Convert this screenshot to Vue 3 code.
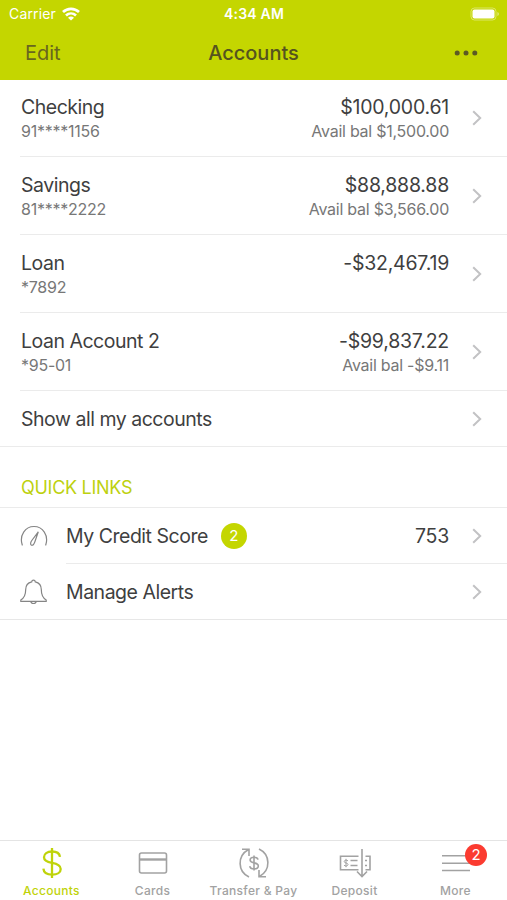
<template>
  <div class="screen">
    <header class="top">
      <div class="status-bar">
        <div class="carrier">
          <span>Carrier</span>
          <svg class="wifi" viewBox="0 0 18 14" fill="none" stroke="#fff" stroke-width="2.7">
            <path d="M1 5.1C5.5.8 12.5.8 17 5.1"></path>
            <path d="M4 8.5c2.9-2.700 7.100-2.700 10 0"></path>
            <path d="M9 13.600 6 10.700c1.700-1.500 4.300-1.500 6 0z" fill="#fff" stroke="none"></path>
          </svg>
        </div>
        <span class="time">4:34 AM</span>
        <svg class="battery" viewBox="0 0 30 14">
          <rect x="1" y="1" width="25" height="12" rx="3.5" fill="none" stroke="#fff" stroke-opacity=".4"></rect>
          <rect x="2.5" y="2.5" width="22" height="9" rx="2" fill="#fff"></rect>
          <path d="M27.5 5v4c1.7-.7 1.7-3.3 0-4z" fill="#fff" fill-opacity=".6"></path>
        </svg>
      </div>
      <nav class="nav-bar">
        <button type="button" class="btn-edit">Edit</button>
        <h1 class="title">Accounts</h1>
        <button type="button" class="btn-more" aria-label="Options">
          <svg viewBox="0 0 24 6" fill="#5c5a24">
            <circle cx="3.2" cy="3" r="2.5"></circle>
            <circle cx="12" cy="3" r="2.5"></circle>
            <circle cx="20.8" cy="3" r="2.5"></circle>
          </svg>
        </button>
      </nav>
    </header>

    <main class="content">
      <section class="accounts">
        <div v-for="account in accounts" :key="account.number" class="row account">
          <div class="names">
            <span class="main-text">{{ account.name }}</span>
            <span class="sub-text">{{ account.number }}</span>
          </div>
          <div class="amounts">
            <span class="amount">{{ account.balance }}</span>
            <span v-if="account.available" class="sub-text">Avail bal {{ account.available }}</span>
          </div>
          <svg class="chevron" viewBox="0 0 10 16"><path d="M1.2 1.2 8.2 8l-7 6.8"></path></svg>
        </div>
        <div class="row show-all">
          <span class="main-text grow">Show all my accounts</span>
          <svg class="chevron" viewBox="0 0 10 16"><path d="M1.2 1.2 8.2 8l-7 6.8"></path></svg>
        </div>
      </section>

      <h2 class="section-title">QUICK LINKS</h2>

      <section class="links">
        <div class="link">
          <svg class="link-icon" viewBox="0 0 28 28">
            <path d="M2.800 22.800h-.6C-.8 13.200 5.200 4.500 14 4.500s14.800 8.700 11.800 18.300h-.6"></path>
            <path d="M18.300 9.800 11.800 18.500c-1.400 2-1.600 4-.4 4.600 1.300.600 2.700-.700 3.300-2.900z"></path>
          </svg>
          <div class="row link-body">
            <span class="main-text">My Credit Score</span>
            <span class="badge">2</span>
            <span class="amount score">753</span>
            <svg class="chevron" viewBox="0 0 10 16"><path d="M1.2 1.2 8.2 8l-7 6.8"></path></svg>
          </div>
        </div>
        <div class="link">
          <svg class="link-icon" viewBox="0 0 28 28">
            <path d="M11.700 3.900c.2-2.500 3.400-2.500 3.600 0 3.900.9 6 3.800 6 7.700 0 5.500 1.200 8.300 4.900 10.500v1.200H.8v-1.200c3.700-2.200 4.900-5 4.900-10.500 0-3.900 2.100-6.800 6-7.700z"></path>
            <path d="M10.800 23.300c.5 2.900 4.900 2.900 5.400 0"></path>
          </svg>
          <div class="row link-body">
            <span class="main-text grow">Manage Alerts</span>
            <svg class="chevron" viewBox="0 0 10 16"><path d="M1.2 1.2 8.2 8l-7 6.8"></path></svg>
          </div>
        </div>
      </section>
    </main>

    <footer class="tab-bar">
      <div class="tab active">
        <svg class="tab-icon" viewBox="0 0 36 32" stroke-width="2.3">
          <path d="M18 1v30"></path>
          <path d="M26 9.800C25.500 6.300 22.500 4.500 18 4.500c-4.800 0-8 2.300-8 5.700 0 3.500 3 4.700 8 5.600 5.300.9 8.700 2.300 8.700 6.100 0 3.600-3.400 5.800-8.500 5.800-5.200 0-8.500-2.200-8.800-6"></path>
        </svg>
        <span>Accounts</span>
      </div>
      <div class="tab">
        <svg class="tab-icon" viewBox="0 0 36 32">
          <rect x="4.500" y="6" width="27" height="20" rx="2"></rect>
          <path d="M4.500 12.500h27" stroke-width="2.4"></path>
        </svg>
        <span>Cards</span>
      </div>
      <div class="tab">
        <svg class="tab-icon" viewBox="0 0 36 32">
          <path d="M13 30C1.500 24.500 1 9 12.500 2.500M6 2.200h7v6.800"></path>
          <path d="M23 2C34.500 7.500 35 23 23.500 29.500M30 29.800h-7v-6.800"></path>
          <path d="M18 8.500v15M22 12.600c-.3-1.600-1.900-2.400-4-2.400-2.300 0-3.900 1.100-3.900 2.800 0 1.800 1.500 2.400 4 2.900 2.700.5 4.200 1.200 4.200 3.100 0 1.800-1.700 2.900-4.200 2.900-2.400 0-4.100-1-4.300-2.800"></path>
        </svg>
        <span>Transfer &amp; Pay</span>
      </div>
      <div class="tab">
        <svg class="tab-icon" viewBox="0 0 36 32">
          <path d="M21.500 9.200H3.500v13.500h18M28.500 9.200h4.500v13.500h-4.500"></path>
          <path d="M25 2v27M20 24.500l5 5 5-5"></path>
          <path d="M13.500 13.500h7M13.500 18.500h7M28 13.500h2M28 18.500h2"></path>
          <path d="M9 11.800v8.400M11 13.900c-1-1.200-3.800-.9-3.800.6 0 2 3.800 1 3.800 3 0 1.700-2.900 2-4 .7" stroke-width="1"></path>
        </svg>
        <span>Deposit</span>
      </div>
      <div class="tab">
        <svg class="tab-icon" viewBox="0 0 36 32">
          <path d="M4 8.700h28M4 16.200h28M4 23.500h28"></path>
        </svg>
        <span>More</span>
        <span class="tab-badge">2</span>
      </div>
    </footer>
  </div>
</template>

<script setup>
const accounts = [
  { name: 'Checking', number: '91****1156', balance: '$100,000.61', available: '$1,500.00' },
  { name: 'Savings', number: '81****2222', balance: '$88,888.88', available: '$3,566.00' },
  { name: 'Loan', number: '*7892', balance: '-$32,467.19' },
  { name: 'Loan Account 2', number: '*95-01', balance: '-$99,837.22', available: '-$9.11' }
]
</script>

<style>
body {
  margin: 0;
  background: #fff;
}
</style>

<style scoped>
.screen {
  display: flex;
  flex-direction: column;
  width: 100%;
  height: 100vh;
  overflow: hidden;
  background: #fff;
  color: #3f3f3f;
  font-family: Inter, "Liberation Sans", sans-serif;
}

.top {
  height: 79px;
  background: #c4d600;
  box-shadow: 0 1px 0 #c4d600;
}

.status-bar {
  display: grid;
  grid-template-columns: 1fr auto 1fr;
  align-items: center;
  height: 27px;
  padding: 0 8px 0 9px;
  color: #fff;
  font-size: 14px;
  line-height: 27px;
}

.carrier {
  display: flex;
  align-items: center;
  gap: 6px;
  letter-spacing: 0.15px;
}

.wifi {
  width: 18px;
  height: 14px;
}

.time {
  font-weight: 600;
  letter-spacing: 0.2px;
}

.battery {
  justify-self: end;
  width: 30px;
  height: 14px;
  margin-right: -1px;
}

.nav-bar {
  display: grid;
  grid-template-columns: 1fr auto 1fr;
  align-items: center;
  height: 52px;
  padding: 0 25px;
}

button {
  padding: 0;
  border: none;
  background: none;
  font-family: inherit;
  cursor: pointer;
}

.btn-edit {
  justify-self: start;
  color: #68661f;
  font-size: 20px;
}

.title {
  margin: 0;
  color: #55531f;
  font-size: 20px;
  font-weight: 450;
}

.btn-more {
  display: flex;
  justify-self: end;
  margin-right: 4px;
}

.btn-more svg {
  width: 24px;
  height: 6px;
}

.row {
  display: flex;
  align-items: center;
  box-sizing: border-box;
  padding-right: 25px;
  border-bottom: 1px solid #ebebeb;
}

.account {
  height: 78px;
  margin-left: 20px;
  padding-left: 1px;
}

.names,
.amounts {
  display: flex;
  flex-direction: column;
  align-self: flex-start;
  padding-top: 16px;
}

.names,
.grow {
  flex: 1;
}

.amounts {
  align-items: flex-end;
}

.main-text,
.amount {
  font-size: 19.5px;
  line-height: 24px;
}

.main-text {
  letter-spacing: -0.48px;
}

.amount {
  letter-spacing: -0.22px;
}

.sub-text {
  color: #777;
  font-size: 16px;
  line-height: 24px;
  letter-spacing: -0.25px;
}

.chevron {
  width: 10px;
  height: 16px;
  margin-left: 23px;
  fill: none;
  stroke: #c2c2c4;
  stroke-width: 2;
}

.show-all {
  height: 56px;
  padding-left: 21px;
}

.section-title {
  display: flex;
  align-items: center;
  box-sizing: border-box;
  height: 61px;
  margin: 0;
  padding: 20px 0 0 21px;
  border-bottom: 1px solid #ebebeb;
  color: #bdd10f;
  font-size: 18px;
  font-weight: 400;
  letter-spacing: -0.28px;
}

.links {
  border-bottom: 1px solid #e7e7e7;
}

.link {
  display: flex;
  align-items: center;
  padding-left: 20px;
}

.link-icon {
  width: 28px;
  height: 28px;
  fill: none;
  stroke: #858585;
  stroke-width: 1.2;
}

.link-body {
  flex: 1;
  height: 56px;
  margin-left: 18px;
}

.link:last-child .link-body {
  height: 55px;
  border-bottom: none;
}

.badge {
  width: 26px;
  height: 26px;
  margin-left: 13px;
  border-radius: 50%;
  background: #c4d600;
  color: #fff;
  font-size: 15px;
  line-height: 26px;
  text-align: center;
}

.score {
  margin-left: auto;
}

.tab-bar {
  display: grid;
  grid-template-columns: repeat(5, 101px);
  box-sizing: border-box;
  height: 60px;
  margin-top: auto;
  padding-left: 1px;
  border-top: 1px solid #e4e4e4;
}

.tab {
  position: relative;
  display: flex;
  flex-direction: column;
  align-items: center;
  padding-top: 6px;
  color: #a2a2a2;
  font-size: 12px;
  font-weight: 500;
  line-height: 16px;
  white-space: nowrap;
  letter-spacing: 0.3px;
}

.tab-icon {
  width: 36px;
  height: 32px;
  margin-bottom: 4px;
  fill: none;
  stroke: currentColor;
  stroke-width: 1.6;
}

.tab.active {
  color: #bfd30a;
}

.tab.active .tab-icon {
  stroke-width: 2.3;
}

.tab-badge {
  position: absolute;
  top: 3px;
  left: 60px;
  width: 22px;
  height: 22px;
  border-radius: 50%;
  background: #fb3b30;
  color: #fff;
  font-size: 15px;
  font-weight: 400;
  line-height: 22px;
  text-align: center;
  letter-spacing: 0;
}
</style>
